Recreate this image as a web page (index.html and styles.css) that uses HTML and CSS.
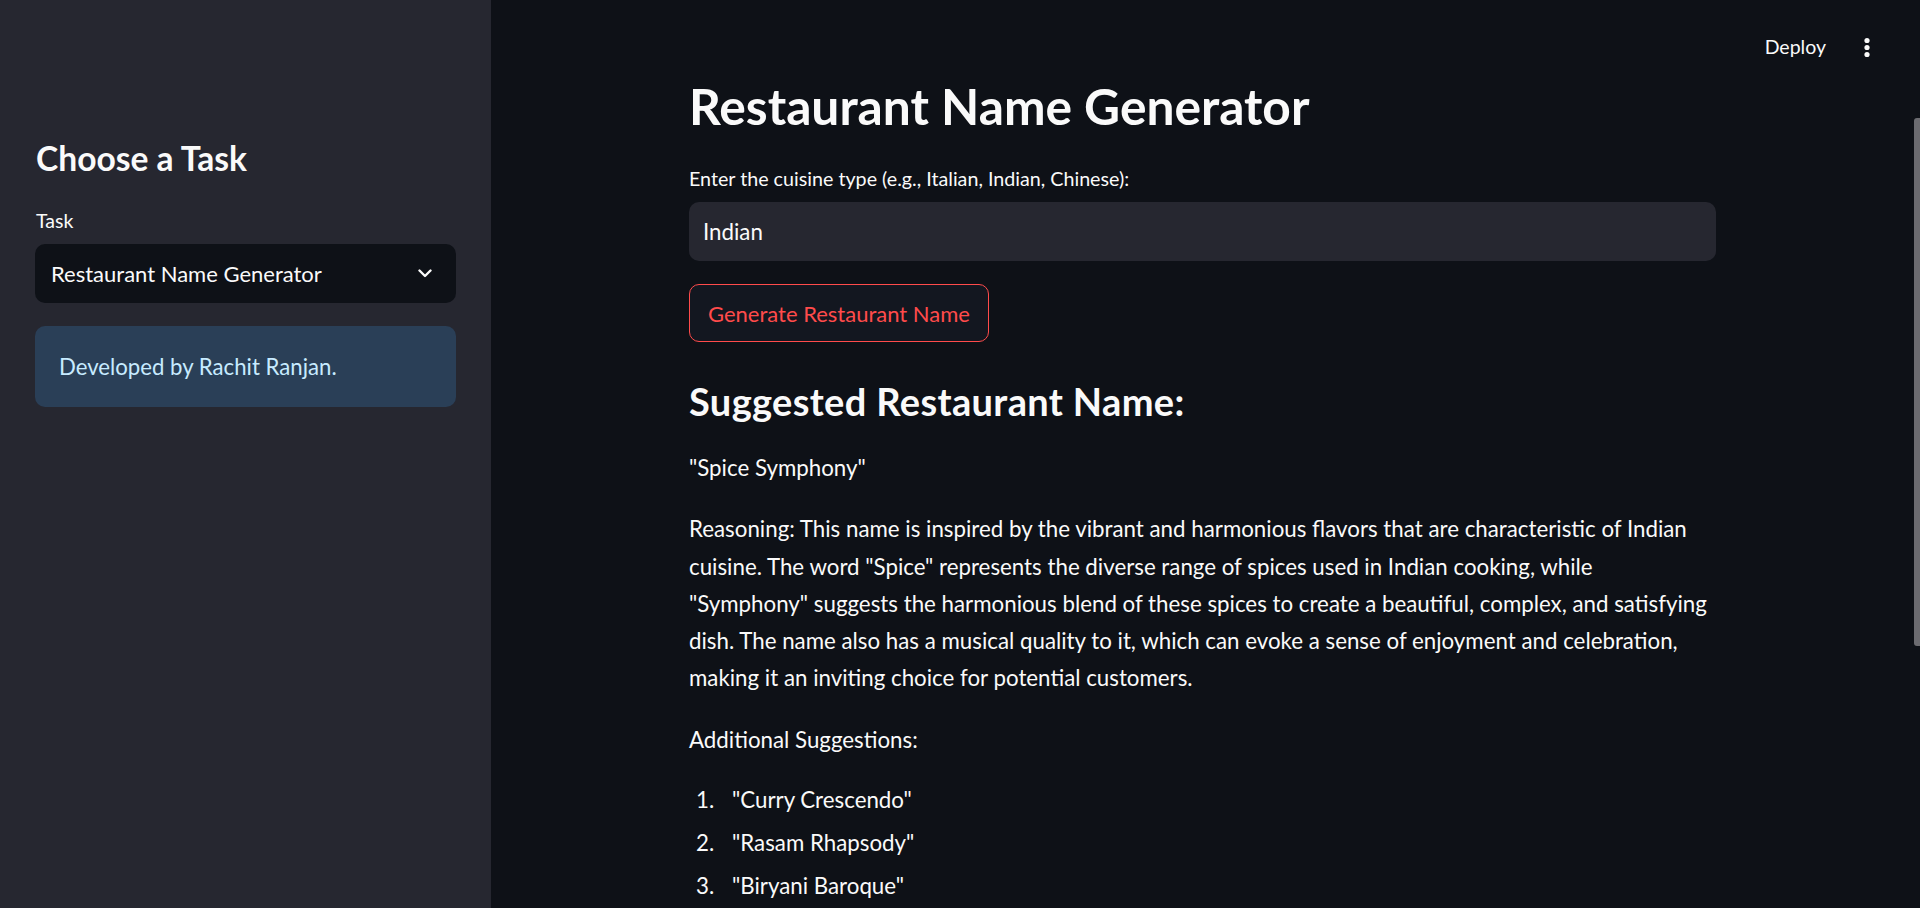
FILE: index.html
```html
<!DOCTYPE html>
<html lang="en">
<head>
<meta charset="utf-8">
<title>Restaurant Name Generator</title>
<link rel="stylesheet" href="styles.css">
</head>
<body>
<div class="app">
  <aside class="sidebar">
    <h2 class="side-title">Choose a Task</h2>
    <div class="field-label">Task</div>
    <div class="select">
      <span class="select-value">Restaurant Name Generator</span>
      <svg class="chevron" width="14" height="9" viewBox="0 0 14 9"><path d="M1.5 1.5 L7 7 L12.5 1.5" fill="none" stroke="#fafafa" stroke-width="2.4" stroke-linecap="round" stroke-linejoin="round"/></svg>
    </div>
    <div class="info">Developed by Rachit Ranjan.</div>
  </aside>
  <main class="main">
    <header class="topbar">
      <span class="deploy">Deploy</span>
      <svg class="kebab" width="8" height="22" viewBox="0 0 8 22"><circle cx="4" cy="3.5" r="2.6" fill="#fafafa"/><circle cx="4" cy="10.5" r="2.6" fill="#fafafa"/><circle cx="4" cy="17.5" r="2.6" fill="#fafafa"/></svg>
    </header>
    <div class="block">
      <h1 class="title">Restaurant Name Generator</h1>
      <label class="input-label">Enter the cuisine type (e.g., Italian, Indian, Chinese):</label>
      <div class="text-input">Indian</div>
      <button class="btn">Generate Restaurant Name</button>
      <h2 class="subtitle">Suggested Restaurant Name:</h2>
      <p class="para">"Spice Symphony"</p>
      <p class="para">Reasoning: This name is inspired by the vibrant and harmonious flavors that are characteristic of Indian cuisine. The word "Spice" represents the diverse range of spices used in Indian cooking, while "Symphony" suggests the harmonious blend of these spices to create a beautiful, complex, and satisfying dish. The name also has a musical quality to it, which can evoke a sense of enjoyment and celebration, making it an inviting choice for potential customers.</p>
      <p class="para">Additional Suggestions:</p>
      <ol class="list">
        <li>"Curry Crescendo"</li>
        <li>"Rasam Rhapsody"</li>
        <li>"Biryani Baroque"</li>
      </ol>
    </div>
    <div class="scroll-thumb"></div>
  </main>
</div>
</body>
</html>
```
FILE: styles.css
```css
*, *::before, *::after { box-sizing: border-box; }
html, body { margin: 0; padding: 0; height: 100%; }
body {
  font-family: "Lato", "Noto Sans", sans-serif;
  color: #fafafa;
  background: #0e1117;
  overflow: hidden;
}
.app { display: flex; height: 908px; }

.sidebar {
  width: 491px;
  flex: 0 0 491px;
  background: #262730;
  padding: 139px 35px 0 35px;
  display: flex;
  flex-direction: column;
}
.side-title {
  margin: 0 0 0 1px;
  font-size: 33.6px;
  line-height: 39px;
  font-weight: 700;
}
.field-label {
  margin: 29px 0 0 1px;
  font-size: 19.5px;
  line-height: 28px;
}
.select {
  margin-top: 9px;
  height: 59px;
  background: #0e1117;
  border-radius: 10px;
  display: flex;
  align-items: center;
  justify-content: space-between;
  padding: 0 24px 0 16px;
  font-size: 22px;
}
.info {
  margin-top: 23px;
  height: 81px;
  background: #2a3f57;
  color: #c7ebff;
  border-radius: 10px;
  display: flex;
  align-items: center;
  padding: 0 24px;
  font-size: 22.2px;
}

.main {
  flex: 1;
  position: relative;
  padding-right: 6px;
}
.topbar {
  position: absolute;
  top: 0;
  right: 0;
  height: 94px;
  display: flex;
  align-items: flex-start;
  gap: 37px;
  padding: 34px 49px 0 0;
}
.deploy { font-size: 19.5px; line-height: 26px; }
.kebab { margin-top: 3px; }

.block {
  width: 1027px;
  margin: 0 auto;
  padding-top: 76px;
  display: flex;
  flex-direction: column;
  align-items: flex-start;
}
.title {
  margin: 0;
  font-size: 49.7px;
  line-height: 60px;
  font-weight: 700;
}
.input-label {
  margin-top: 29px;
  font-size: 19.7px;
  line-height: 28px;
}
.text-input {
  margin-top: 9px;
  width: 100%;
  height: 59px;
  background: #262730;
  border-radius: 10px;
  display: flex;
  align-items: center;
  padding: 0 14px;
  font-size: 22.3px;
}
.btn {
  margin-top: 23px;
  height: 58px;
  padding: 0 18px;
  background: #131720;
  border: 1px solid #ff4b4b;
  border-radius: 10px;
  color: #ff4b4b;
  font-family: inherit;
  font-size: 22px;
}
.subtitle {
  margin: 38px 0 0 0;
  font-size: 38px;
  line-height: 43px;
  font-weight: 700;
  letter-spacing: 0.35px;
}
.para {
  margin: 26px 0 0 0;
  max-width: 1020px;
  font-size: 22.3px;
  line-height: 37.25px;
}
.para + .para { margin-top: 24px; }
.list {
  margin: 23px 0 0 0;
  padding: 0;
  list-style: none;
  counter-reset: item;
  font-size: 22.3px;
  line-height: 37.25px;
}
.list li {
  counter-increment: item;
  margin-bottom: 6px;
}
.list li::before {
  content: counter(item) ".";
  display: inline-block;
  width: 43px;
  padding-left: 7px;
}

.scroll-thumb {
  position: absolute;
  right: 0;
  top: 118px;
  width: 6px;
  height: 528px;
  border-radius: 3px 0 0 3px;
  background: #6b6b70;
}
```
